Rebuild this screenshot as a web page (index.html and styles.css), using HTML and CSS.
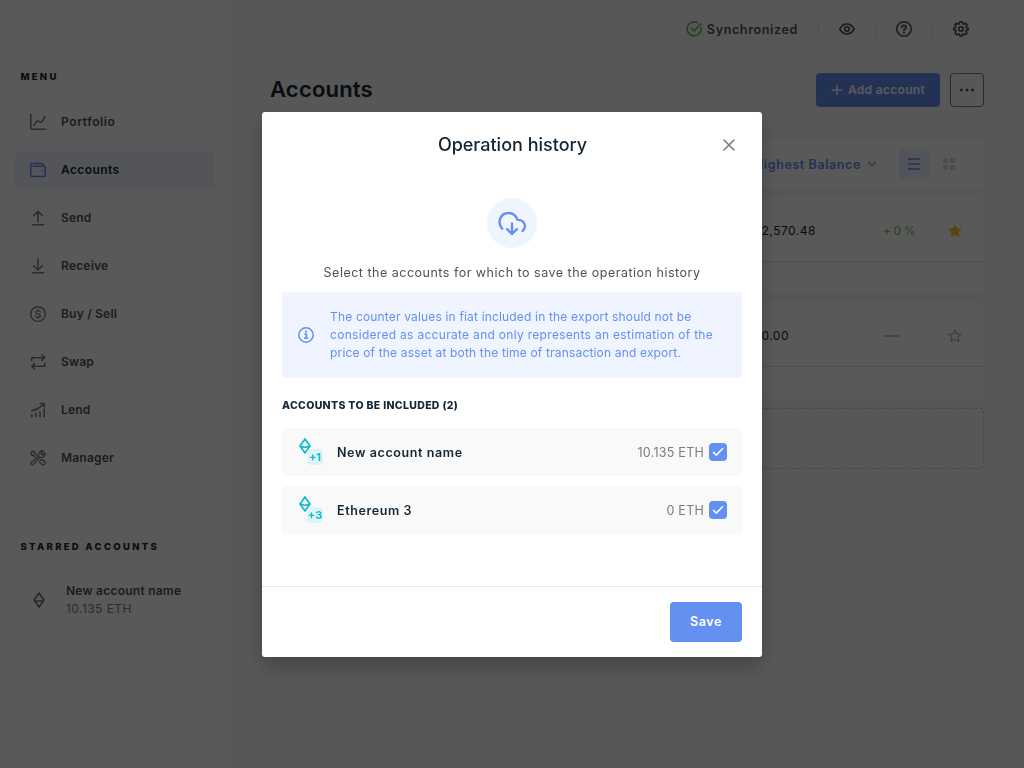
FILE: index.html
```
<!DOCTYPE html>
<html lang="en">
<head>
<meta charset="utf-8">
<title>Operation history</title>
<link rel="stylesheet" href="styles.css">
</head>
<body>
<svg class="defs" width="0" height="0">
  <symbol id="eth" viewBox="0 0 12 16"><path d="M6 1 1 8l5 7 5-7zM1.300 8.100Q6 10.400 10.700 8.100" fill="none" stroke="currentColor" stroke-width="1.700" stroke-linejoin="round"/></symbol>
  <symbol id="tick" viewBox="0 0 12 10"><path d="M1.500 5.400 4.300 8.100 10.500 1.800" fill="none" stroke="currentColor" stroke-width="1.500" stroke-linecap="round" stroke-linejoin="round"/></symbol>
</svg>
<div class="app">
  <aside class="sidebar">
    <div class="caption">MENU</div>
    <nav class="menu">
      <a class="item wide"><svg viewBox="0 0 16 16"><path d="M.7.500V13.400Q.7 15.200 2.500 15.200H15.200M4 11.400 6.500 7.600Q7 6.900 7.800 7.200L10.500 8.100Q11.500 8.400 12 7.500L15 2.700"/></svg><span>Portfolio</span></a>
      <a class="item active"><svg viewBox="0 0 16 16"><path d="M13.500 4.300V3.100Q13.500 1.500 12 1.500H2.500Q.7 1.500.7 3.200V12.700Q.7 14.500 2.500 14.500H13.700Q15.300 14.500 15.300 12.900V6Q15.300 4.300 13.700 4.300H3.200M12 9h.4"/></svg><span>Accounts</span></a>
      <a class="item"><svg viewBox="0 0 16 16"><path d="M8 12V1.300M3.600 5.500 8 1.200l4.400 4.300M2.800 14.700h10.600"/></svg><span>Send</span></a>
      <a class="item"><svg viewBox="0 0 16 16"><path d="M8 1.200v10.900M3.600 7.700 8 12l4.400-4.300M2.800 14.700h10.600"/></svg><span>Receive</span></a>
      <a class="item"><svg class="fine" viewBox="0 0 16 16"><circle cx="8" cy="8" r="7.300"/><path d="M10.300 5.900Q9.800 4.900 8 4.900 5.800 4.900 5.800 6.400 5.800 7.600 8 7.900 10.300 8.200 10.300 9.700 10.300 11.200 8 11.200 6.200 11.200 5.700 10.200M8 3.700V4.900M8 11.200V12.300"/></svg><span>Buy / Sell</span></a>
      <a class="item"><svg viewBox="0 0 16 16"><path d="M1.700 6.700V3.700H14.500M11.800 1 14.600 3.700 11.800 6.400M14.800 9.300V12.300H2M4.700 9.600 1.900 12.300 4.700 15"/></svg><span>Swap</span></a>
      <a class="item"><svg viewBox="0 0 16 16"><path d="M1.700 8.600Q8.200 7.400 13.600 2.300M10.500 1.500H14.300V5M1.800 14.800V12.800M5.900 14.800V11.400M10 14.800V9.700M14.200 14.800V7.400"/></svg><span>Lend</span></a>
      <a class="item"><svg class="fine" viewBox="0 0 16 16"><path d="M5 6.700 3.400 5.200H1.900L.8 3 2.700 1.100 4.900 2.200V3.700L6.600 5.300M9.800 10.700 11 9.600Q12.100 9.200 13 10L15 12.200Q15.400 13.600 14.300 14.500 13 15.500 11.900 14.600L9.600 12.300M8.700 6.300Q8 2.800 10.500 1.200 12 .4 13.300 1.100L11 3.400 12.600 5 14.900 2.900Q15.500 5.300 13.700 6.700 12 7.800 9.900 7.100L3.700 13.900Q2.600 15.200 1.500 14.300.4 13.200 1.600 12.100L8.700 6.300"/></svg><span>Manager</span></a>
    </nav>
    <div class="caption starred">STARRED ACCOUNTS</div>
    <div class="star-item">
      <svg width="12" height="16"><use href="#eth"/></svg>
      <div><div class="star-name">New account name</div><div class="star-bal">10.135 ETH</div></div>
    </div>
  </aside>
  <main class="main">
    <header class="topbar">
      <svg class="sync" viewBox="0 0 16 16"><path d="M14.900 6.500A7 7 0 1 1 11.500 1.800M5.200 7.300 8 10 14.900 2.700"/></svg>
      <span class="sync-text">Synchronized</span>
      <i class="sep"></i>
      <svg viewBox="0 0 16 16"><path d="M.8 8Q3.500 3 8 3t7.200 5Q12.500 13 8 13T.8 8Z"/><circle cx="8" cy="8" r="2.200"/></svg>
      <i class="sep"></i>
      <svg viewBox="0 0 16 16"><circle cx="8" cy="8" r="7.200"/><path d="M5.900 6.200Q6 4.300 8 4.300t2.200 1.800Q10.200 7.100 9 7.700 8 8.200 8 9.200M8 11.400v.5" stroke-width="1.800"/></svg>
      <i class="sep"></i>
      <svg viewBox="0 0 16 16"><path d="M6.600.8H9.400L9.800 2.700 11 3.300 12.800 2.200 14.200 4 13 5.800 13.400 6.800 15.200 7.100V9L13.300 9.400 12.900 10.400 13.900 12.200 12.200 13.900 10.500 12.900 9.400 13.300 9 15.200H7L6.600 13.300 5.500 12.900 3.800 13.900 2.100 12.200 3.100 10.400 2.700 9.400.8 9V7.100L2.600 6.800 3 5.800 1.800 4 3.300 2.200 5 3.300 6.200 2.700Z"/><circle cx="8" cy="8.100" r="2.200"/></svg>
    </header>
    <div class="title-row">
      <h1>Accounts</h1>
      <button class="add"><svg width="12" height="12" viewBox="0 0 12 12"><path d="M6 .8v10.400M.8 6h10.400" stroke="currentColor" stroke-width="1.500"/></svg><span>Add account</span></button>
      <button class="more"><svg width="16" height="4" viewBox="0 0 16 4" fill="currentColor"><circle cx="2.500" cy="2" r="1.500"/><circle cx="8" cy="2" r="1.500"/><circle cx="13.500" cy="2" r="1.500"/></svg></button>
    </div>
    <section class="card filters">
      <span class="sort">Highest Balance</span>
      <svg class="chev" width="10" height="6" viewBox="0 0 10 6"><path d="m1.300 1 3.700 3.700L8.700 1" fill="none" stroke="currentColor" stroke-width="1.300"/></svg>
      <span class="view on"><svg width="12" height="12" viewBox="0 0 12 12"><path d="M0 1h12M0 6h12M0 11h12" stroke="currentColor" stroke-width="1.700"/></svg></span>
      <span class="view"><svg width="12" height="12" viewBox="0 0 12 12" fill="currentColor"><rect width="5" height="5" rx="1"/><rect x="7" width="5" height="5" rx="1"/><rect y="7" width="5" height="5" rx="1"/><rect x="7" y="7" width="5" height="5" rx="1"/></svg></span>
    </section>
    <section class="card account">
      <div class="line"><span class="fiat">$12,570.48</span><span class="delta">+ 0 %</span><svg class="fav full" viewBox="0 0 14 14"><path d="m7 1 1.800 3.900 4.300.5-3.200 2.900.9 4.200L7 10.400l-3.800 2.100.9-4.200L.9 5.400l4.300-.5z"/></svg></div>
    </section>
    <section class="card account">
      <div class="line"><span class="fiat zero">$0.00</span><span class="delta"><i class="dash"></i></span><svg class="fav" viewBox="0 0 14 14"><path d="m7 1 1.800 3.900 4.300.5-3.200 2.900.9 4.200L7 10.400l-3.800 2.100.9-4.200L.9 5.400l4.300-.5z"/></svg></div>
    </section>
    <section class="placeholder"></section>
  </main>
</div>
<div class="backdrop">
  <div class="modal">
    <header class="modal-head"><h2>Operation history</h2><svg class="close" width="12" height="12" viewBox="0 0 12 12"><path d="m1 1 10 10M11 1 1 11" stroke="currentColor" stroke-width="1.600" stroke-linecap="round"/></svg></header>
    <div class="modal-body">
      <div class="cloud"><svg width="30" height="30" viewBox="0 0 30 30"><path d="M5.200 20.700C-.2 14.500 3.300 5 11.500 5c4.500 0 7.600 2.700 9 6.900 4.400-.3 7.500 2.700 7.500 6.200 0 2.100-.9 3.800-2.500 5M15 15.500V25.900M10.100 21.200 15 26l4.900-4.800" fill="none" stroke="currentColor" stroke-width="2.400" stroke-linecap="round" stroke-linejoin="round"/></svg></div>
      <p class="lead">Select the accounts for which to save the operation history</p>
      <div class="notice">
        <svg width="16" height="16" viewBox="0 0 16 16"><circle cx="8" cy="8" r="7.200" fill="none" stroke="currentColor" stroke-width="1.500"/><path d="M6.300 7.300H8.400V11.200M6 11.300h4.200" fill="none" stroke="currentColor" stroke-width="1.600"/><circle cx="8" cy="4.700" r="1.100" fill="currentColor"/></svg>
        <div><div class="tight">The counter values in fiat included in the export should not be</div><div>considered as accurate and only represents an estimation of the</div><div class="tight">price of the asset at both the time of transaction and export.</div></div>
      </div>
      <div class="list-title">ACCOUNTS TO BE INCLUDED (2)</div>
      <div class="row"><div class="coin"><svg width="12" height="16"><use href="#eth"/></svg><span class="badge">+1</span></div><span class="name">New account name</span><span class="bal">10.135 ETH</span><span class="check"><svg width="12" height="10"><use href="#tick"/></svg></span></div>
      <div class="row"><div class="coin"><svg width="12" height="16"><use href="#eth"/></svg><span class="badge">+3</span></div><span class="name">Ethereum 3</span><span class="bal">0 ETH</span><span class="check"><svg width="12" height="10"><use href="#tick"/></svg></span></div>
    </div>
    <footer class="modal-foot"><button class="save">Save</button></footer>
  </div>
</div>
</body>
</html>
```
FILE: styles.css
```
* { box-sizing: border-box; }
body { margin: 0; height: 768px; overflow: hidden; font-family: Inter, sans-serif; font-size: 13px; color: #142533; }
h1, h2, p { margin: 0; }
svg { flex: none; display: block; }
button { font: inherit; border: 0; padding: 0; display: flex; align-items: center; justify-content: center; }
.defs { position: absolute; }
.app { display: flex; height: 768px; background: #f9f9f9; }

.sidebar { width: 230px; flex: none; background: #fff; padding: 70px 15px 0; }
.caption { font-size: 9.500px; font-weight: 800; letter-spacing: 2.300px; line-height: 13px; padding-left: 5.500px; }
.menu { display: flex; flex-direction: column; gap: 10px; margin-top: 20px; }
.item { display: flex; align-items: center; gap: 15px; height: 38px; padding-left: 15px; border-radius: 4px; font-weight: 600; font-size: 12px; letter-spacing: .2px; color: #48535c; }
.item span { padding-bottom: 2px; }
.item svg { width: 16px; height: 16px; fill: none; stroke: #767e85; stroke-width: 1.600; stroke-linecap: round; stroke-linejoin: round; }
.item svg.fine { stroke-width: 1.350; }
.item.wide { letter-spacing: .6px; }
.item.active { background: #eff3fd; color: #142533; letter-spacing: .4px; }
.item.active svg { stroke: #6490f1; }
.starred { margin-top: 63px; }
.star-item { display: flex; align-items: center; gap: 21px; padding-left: 18px; margin-top: 29px; color: #767e85; }
.star-name { font-weight: 600; color: #48535c; line-height: 18px; font-size: 12px; letter-spacing: .24px; }
.star-bal { line-height: 18px; font-size: 12px; letter-spacing: .45px; color: #767e85; }

.main { flex: 1; padding: 0 40px; }
.topbar { display: flex; align-items: center; justify-content: flex-end; height: 58px; padding-right: 15px; }
.topbar svg { width: 16px; height: 16px; fill: none; stroke: #48535c; stroke-width: 1.600; stroke-linecap: round; stroke-linejoin: round; }
.topbar .sync { stroke: #66be54; }
.sync-text { margin-left: 5px; font-size: 12.500px; font-weight: 600; letter-spacing: .65px; color: #48535c; }
.sep { width: 1px; height: 15px; margin: 0 20px; background: #e6e6e6; }
.title-row { display: flex; align-items: center; gap: 10px; height: 34px; margin-top: 15px; }
h1 { flex: 1; font-size: 22px; font-weight: 600; line-height: 26px; letter-spacing: .2px; padding-bottom: 2px; }
.add { width: 124px; height: 34px; gap: 5px; border-radius: 4px; background: #6490f1; color: #fff; font-weight: 600; font-size: 12px; letter-spacing: .32px; }
.add span { padding-bottom: 2px; }
.more { width: 34px; height: 34px; border: 1px solid #767e85; border-radius: 4px; background: none; color: #48535c; }
.card { background: #fff; border-radius: 4px; box-shadow: 0 4px 8px rgba(0,0,0,.02); }
.filters { display: flex; align-items: center; justify-content: flex-end; height: 50px; margin-top: 32px; padding-right: 20px; color: #6490f1; }
.sort { font-size: 12.500px; font-weight: 600; letter-spacing: .6px; }
.chev { margin: 0 22px 0 6px; }
.view { display: flex; align-items: center; justify-content: center; width: 30px; height: 30px; color: #d8d8d8; border-radius: 4px; }
.view.on { background: #eaf0fe; color: #6490f1; margin-right: 5px; }
.account { height: 96px; margin-top: 9px; }
.line { display: flex; align-items: center; justify-content: flex-end; height: 64px; padding-top: 2px; padding-right: 22px; border-bottom: 1px solid #dedede; }
.fiat { width: 150px; text-align: right; font-size: 12px; letter-spacing: .5px; margin-right: 67px; }
.fiat.zero { margin-right: 94px; width: 120px; }
.delta { width: 65px; color: #66be54; font-size: 12px; letter-spacing: -.35px; }
.dash { display: block; width: 16px; height: 2px; background: #c3c6c9; }
.fav { width: 14px; height: 14px; fill: none; stroke: #999fa5; overflow: visible; }
.fav.full { fill: #ffc02b; stroke: #ffc02b; }
.placeholder { height: 61px; margin-top: 9px; border: 1px dashed #cdcfd1; border-radius: 4px; }

.backdrop { position: fixed; inset: 0; display: flex; justify-content: center; align-items: center; background: rgba(0,0,0,.65); }
.modal { display: flex; flex-direction: column; width: 500px; height: 545px; background: #fff; border-radius: 3px; box-shadow: 0 10px 20px rgba(0,0,0,.22); }
.modal-head { display: grid; grid-template-columns: 40px 1fr 40px; align-items: center; justify-items: center; height: 66px; padding: 0 13px; color: #767e85; }
h2 { grid-column: 2; font-size: 18px; font-weight: 500; color: #142533; padding-left: 1px; }
.modal-body { flex: 1; padding: 20px 20px 0; }
.cloud { display: flex; align-items: center; justify-content: center; width: 50px; height: 50px; margin: 0 auto; border-radius: 50%; background: #f0f4ff; color: #6490f1; }
.lead { text-align: center; line-height: 20px; margin-top: 15px; font-size: 12.500px; letter-spacing: .5px; color: #48535c; }
.notice { display: flex; align-items: center; gap: 16px; height: 86px; margin-top: 9px; padding-left: 16px; border-radius: 4px; background: #f0f4ff; color: #6490f1; font-size: 12px; line-height: 18px; letter-spacing: .3px; white-space: nowrap; }
.tight { letter-spacing: .17px; }
.list-title { margin: 20px 0 15px; padding-top: 1px; font-size: 10.500px; font-weight: 800; line-height: 14px; letter-spacing: .33px; }
.row { display: flex; align-items: center; height: 48px; margin-bottom: 10px; padding: 0 15px; border-radius: 4px; background: #f9f9f9; }
.coin { position: relative; width: 26px; height: 28px; margin-right: 14px; padding-left: 1.500px; color: #0ebdcd; }
.badge { position: absolute; left: 10px; top: 11px; width: 16px; height: 16px; border-radius: 4px; background: #dff4f6; font-size: 11px; font-weight: 700; line-height: 17px; text-align: center; }
.name { flex: 1; padding-top: 1px; font-size: 12.500px; font-weight: 600; letter-spacing: .6px; }
.bal { margin-right: 5px; padding-top: 1px; font-size: 12.500px; letter-spacing: .25px; color: #767e85; }
.check { display: flex; align-items: center; justify-content: center; width: 18px; height: 18px; border-radius: 4px; background: #6490f1; color: #fff; }
.modal-foot { display: flex; align-items: center; justify-content: flex-end; height: 71px; padding-right: 20px; border-top: 1px solid #e6e6e6; }
.save { width: 72px; height: 40px; border-radius: 4px; background: #6490f1; color: #fff; font-size: 12.500px; font-weight: 600; letter-spacing: .6px; }
```
